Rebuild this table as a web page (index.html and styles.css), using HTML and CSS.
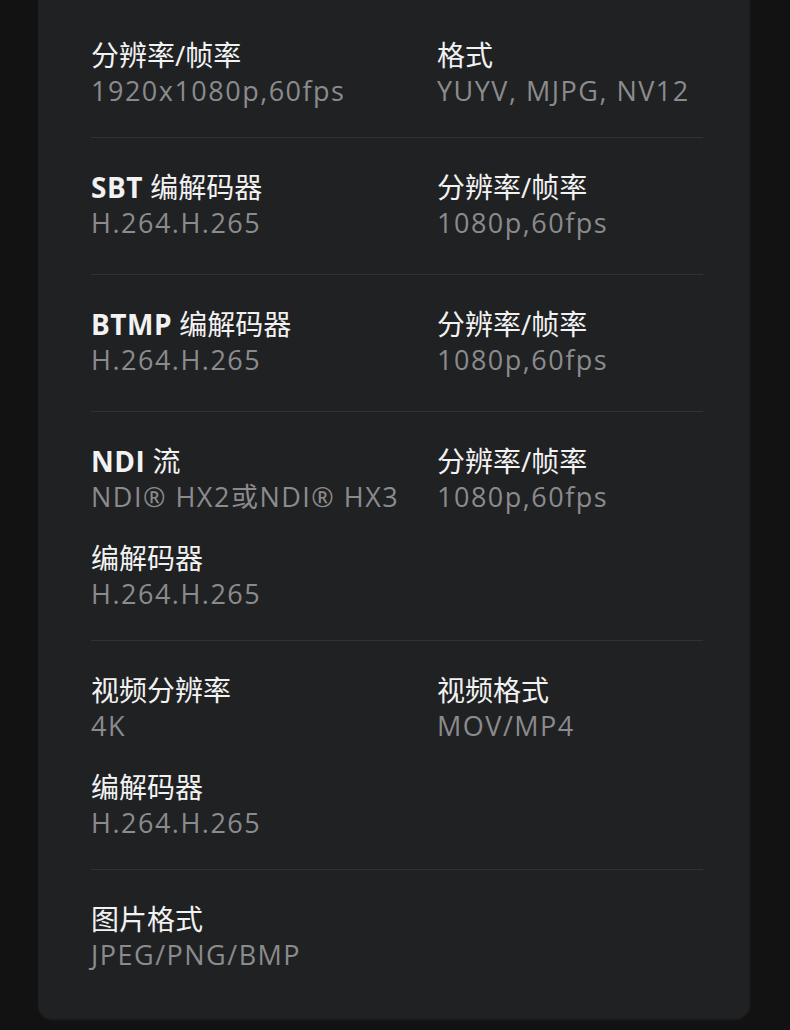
FILE: index.html
```html
<!DOCTYPE html>
<html lang="zh">
<head>
<meta charset="utf-8">
<link rel="stylesheet" href="styles.css">
</head>
<body>
<div class="card">
  <section class="sec">
    <div class="item"><div class="label">分辨率/帧率</div><div class="value">1920x1080p,60fps</div></div>
    <div class="item"><div class="label">格式</div><div class="value">YUYV, MJPG, NV12</div></div>
  </section>
  <section class="sec roomy">
    <div class="item"><div class="label"><b>SBT</b> 编解码器</div><div class="value">H.264.H.265</div></div>
    <div class="item"><div class="label">分辨率/帧率</div><div class="value">1080p,60fps</div></div>
  </section>
  <section class="sec roomy">
    <div class="item"><div class="label"><b>BTMP</b> 编解码器</div><div class="value">H.264.H.265</div></div>
    <div class="item"><div class="label">分辨率/帧率</div><div class="value">1080p,60fps</div></div>
  </section>
  <section class="sec">
    <div class="item"><div class="label"><b>NDI</b> 流</div><div class="value">NDI® HX2或NDI® HX3</div></div>
    <div class="item"><div class="label">分辨率/帧率</div><div class="value">1080p,60fps</div></div>
    <div class="item"><div class="label">编解码器</div><div class="value">H.264.H.265</div></div>
  </section>
  <section class="sec">
    <div class="item"><div class="label">视频分辨率</div><div class="value">4K</div></div>
    <div class="item"><div class="label">视频格式</div><div class="value">MOV/MP4</div></div>
    <div class="item"><div class="label">编解码器</div><div class="value">H.264.H.265</div></div>
  </section>
  <section class="sec last">
    <div class="item"><div class="label">图片格式</div><div class="value">JPEG/PNG/BMP</div></div>
  </section>
</div>
</body>
</html>
```
FILE: styles.css
```css
html, body {
  margin: 0;
  padding: 0;
  background: #121212;
}
body {
  width: 790px;
  height: 1030px;
  overflow: hidden;
}
.card {
  margin: 0 41px 0 38px;
  background: #202123;
  border-radius: 0 0 14px 14px;
  padding: 37px 46px 46px 53px;
  box-shadow: 2px 0 0 #1a1a1b, 0 2px 0 #18181a;
}
.sec {
  display: grid;
  grid-template-columns: 346px 1fr;
  row-gap: 25px;
  padding: 31px 0 28px;
  border-bottom: 1px solid #303134;
}
.sec:first-child {
  padding-top: 0;
}
.sec.roomy {
  padding-bottom: 33px;
}
.sec.last {
  border-bottom: none;
  padding-bottom: 0;
}
.label {
  font-family: "Open Sans", "Noto Sans CJK SC", sans-serif;
  font-size: 28px;
  line-height: 36px;
  color: #f2f2f2;
  white-space: nowrap;
}
.label b {
  font-weight: 700;
  letter-spacing: 0.5px;
}
.value {
  font-family: "Open Sans", "Noto Sans CJK SC", sans-serif;
  font-size: 27px;
  line-height: 36px;
  color: #8b8b8d;
  letter-spacing: 1.5px;
  white-space: nowrap;
}
```
